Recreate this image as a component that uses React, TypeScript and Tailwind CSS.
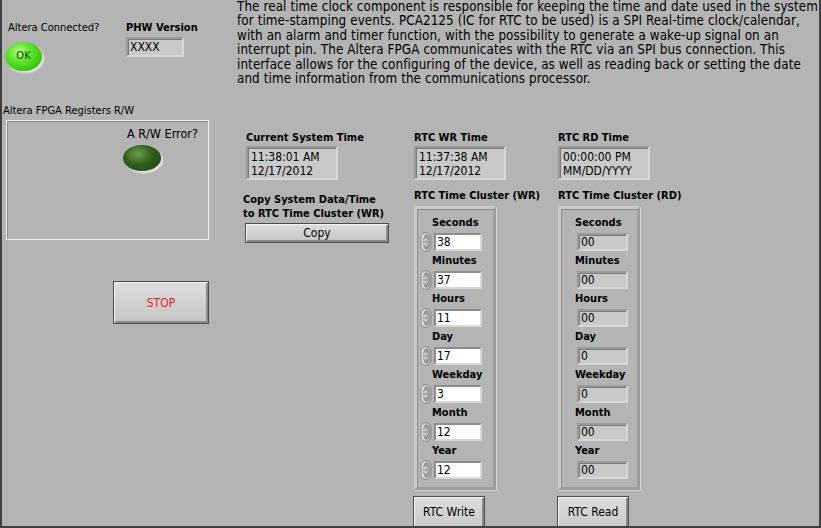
import type { ReactNode } from 'react';

const font = "font-['Tahoma','DejaVu_Sans_Condensed','Liberation_Sans',sans-serif]";

const clusterRows = [
    { label: 'Seconds', wr: '38', rd: '00' },
    { label: 'Minutes', wr: '37', rd: '00' },
    { label: 'Hours', wr: '11', rd: '00' },
    { label: 'Day', wr: '17', rd: '0' },
    { label: 'Weekday', wr: '3', rd: '0' },
    { label: 'Month', wr: '12', rd: '00' },
    { label: 'Year', wr: '12', rd: '00' },
];

const description = [
    'The real time clock component is responsible for keeping the time and date used in the system',
    'for time-stamping events. PCA2125 (IC for RTC to be used) is a SPI Real-time clock/calendar,',
    'with an alarm and timer function, with the possibility to generate a wake-up signal on an',
    'interrupt pin. The Altera FPGA communicates with the RTC via an SPI bus connection.  This',
    'interface allows for the configuring of the device, as well as reading back or setting the date',
    'and time information from the communications processor.',
];

function Label({ children, className = '' }: { children: ReactNode; className?: string }) {
    return <div className={`text-[11px] leading-[14px] font-bold whitespace-nowrap ${className}`}>{children}</div>;
}

// sunken read-only display (LabVIEW indicator)
function Indicator({ children, className = '' }: { children: ReactNode; className?: string }) {
    return (
        <div
            className={`bg-[#c9c9c9] border-2 border-t-[#9a9a9a] border-l-[#9a9a9a] border-b-[#d8d8d8] border-r-[#d8d8d8] shadow-[inset_1px_1px_0_#7a7a7a] text-[12px] leading-[14px] whitespace-nowrap ${className}`}
        >
            {children}
        </div>
    );
}

function Incrementer() {
    return (
        <svg width="12" height="20" viewBox="0 0 12 20" className="shrink-0">
            <defs>
                <linearGradient id="inc" x1="0" x2="1" y1="0" y2="0">
                    <stop offset="0" stopColor="#e8e8e8" />
                    <stop offset="1" stopColor="#9c9c9c" />
                </linearGradient>
            </defs>
            <rect x="1" y="0.5" width="10" height="19" rx="5" fill="url(#inc)" stroke="#8c8c8c" />
            <line x1="2" y1="10" x2="10" y2="10" stroke="#8c8c8c" />
            <path d="M6 3 L3.5 7.5 M6 3 L8.5 7.5" stroke="#6c6c6c" fill="none" />
            <path d="M6 17 L3.5 12.5 M6 17 L8.5 12.5" stroke="#6c6c6c" fill="none" />
        </svg>
    );
}

function Button({ children, className = '', textClass = '' }: { children: ReactNode; className?: string; textClass?: string }) {
    return (
        <div
            className={`flex items-center justify-center border border-[#4c4c4c] bg-[linear-gradient(#dedede,#c4c4c4)] shadow-[inset_1px_1px_0_#f4f4f4,inset_-2px_-2px_0_#8a8a8a] text-[12px] ${textClass} ${className}`}
        >
            {children}
        </div>
    );
}

function Cluster({ side }: { side: 'wr' | 'rd' }) {
    return (
        <div className="w-[82px] h-[284px] border-[3px] border-t-[#cacaca] border-l-[#cacaca] border-b-[#9c9c9c] border-r-[#9c9c9c] shadow-[inset_1px_1px_0_#8c8c8c,1px_1px_0_#d6d6d6] pt-[6px]">
            {clusterRows.map((r) => (
                <div key={r.label} className="h-[38px]">
                    <Label className={side === 'wr' ? 'pl-[15px] pt-[1px]' : 'pl-[14px] pt-[1px]'}>{r.label}</Label>
                    {side === 'wr' ? (
                        <div className="flex items-center mt-[2px] pl-[3px] gap-[2px]">
                            <Incrementer />
                            <div className="w-[48px] h-[18px] bg-white border-2 border-t-[#8c8c8c] border-l-[#8c8c8c] border-b-[#d8d8d8] border-r-[#d8d8d8] text-[12px] leading-[14px] pl-[1px]">
                                {r.wr}
                            </div>
                        </div>
                    ) : (
                        <Indicator className="ml-[16px] mt-[3px] w-[51px] h-[18px] pl-[2px]">{r.rd}</Indicator>
                    )}
                </div>
            ))}
        </div>
    );
}

export default function App() {
    return (
        <div className={`w-[821px] h-[528px] overflow-hidden bg-[#b4b4b4] border-x-2 border-b-2 border-[#404040] text-black ${font} flex flex-col`}>
            {/* top: status + description */}
            <div className="flex h-[104px] shrink-0">
                <div className="w-[235px] shrink-0 flex pt-[21px]">
                    <div className="w-[122px] pl-[6px]">
                        <div className="text-[11px] leading-[14px] whitespace-nowrap">Altera Connected?</div>
                        <div className="ml-[-3px] mt-[7px] w-[37px] h-[29px] rounded-[50%] bg-[radial-gradient(ellipse_at_40%_35%,#b8ff90_0%,#5ee62a_35%,#36c40c_75%,#238a08_100%)] shadow-[2px_2px_2px_#e6e6e6] flex items-center justify-center text-[11px] text-[#163a00]">
                            OK
                        </div>
                    </div>
                    <div className="ml-[2px]">
                        <Label>PHW Version</Label>
                        <Indicator className="mt-[2px] w-[58px] h-[20px] pl-[2px] text-[11px] pt-[1px]">XXXX</Indicator>
                    </div>
                </div>
                <div className="text-[13.3px] tracking-[0.1px] leading-[14.4px] whitespace-nowrap">
                    {description.map((line) => (
                        <div key={line}>{line}</div>
                    ))}
                </div>
            </div>

            {/* lower panel */}
            <div className="flex">
                <div className="w-[235px] shrink-0">
                    <div className="ml-[1px] text-[11px] leading-[14px] whitespace-nowrap">Altera FPGA Registers R/W</div>
                    <div className="ml-[4px] mt-[2px] w-[203px] h-[120px] border border-[#ececec] shadow-[inset_1px_1px_0_#8c8c8c] pl-[116px] pt-[6px]">
                        <div className="ml-[4px] text-[12.5px] leading-[14px] whitespace-nowrap">A R/W Error?</div>
                        <div className="mt-[4px] w-[38px] h-[26px] rounded-[50%] bg-[radial-gradient(ellipse_at_40%_35%,#6e9c50_0%,#2f5e1a_45%,#1e4410_100%)] shadow-[2px_2px_2px_#e6e6e6]" />
                    </div>
                    <Button className="ml-[111px] mt-[41px] w-[96px] h-[43px]" textClass="text-[#ee1c1c]">
                        STOP
                    </Button>
                </div>

                <div className="w-[177px] shrink-0 pl-[6px] pt-[27px]">
                    <Label className="ml-[3px]">Current System Time</Label>
                    <Indicator className="ml-[3px] mt-[1px] w-[92px] h-[34px] pl-[3px] pt-[2px]">
                        <div>11:38:01 AM</div>
                        <div>12/17/2012</div>
                    </Indicator>
                    <Label className="mt-[13px]">
                        Copy System Data/Time
                        <br />
                        to RTC Time Cluster (WR)
                    </Label>
                    <Button className="ml-[2px] mt-[2px] w-[144px] h-[20px]">Copy</Button>
                </div>

                <div className="w-[144px] shrink-0 pt-[27px]">
                    <Label>RTC WR Time</Label>
                    <Indicator className="mt-[1px] w-[92px] h-[34px] pl-[3px] pt-[2px]">
                        <div>11:37:38 AM</div>
                        <div>12/17/2012</div>
                    </Indicator>
                    <Label className="mt-[9px]">RTC Time Cluster (WR)</Label>
                    <div className="mt-[3px]">
                        <Cluster side="wr" />
                    </div>
                    <Button className="ml-[-1px] mt-[6px] w-[72px] h-[40px] pb-[8px]">RTC Write</Button>
                </div>

                <div className="w-[144px] shrink-0 pt-[27px]">
                    <Label>RTC RD Time</Label>
                    <Indicator className="mt-[1px] w-[92px] h-[34px] pl-[3px] pt-[2px]">
                        <div>00:00:00 PM</div>
                        <div>MM/DD/YYYY</div>
                    </Indicator>
                    <Label className="mt-[9px]">RTC Time Cluster (RD)</Label>
                    <div className="mt-[3px]">
                        <Cluster side="rd" />
                    </div>
                    <Button className="ml-[-1px] mt-[6px] w-[72px] h-[40px] pb-[8px]">RTC Read</Button>
                </div>
            </div>
        </div>
    );
}
